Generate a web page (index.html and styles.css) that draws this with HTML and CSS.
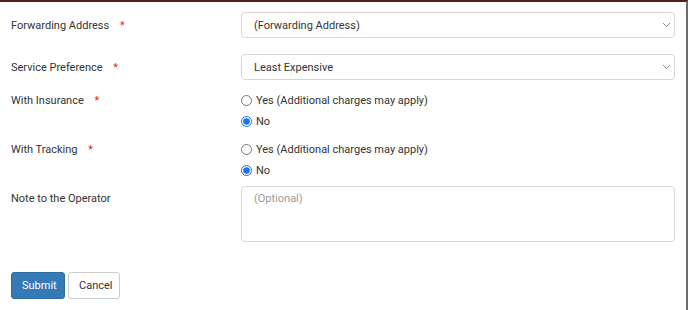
FILE: index.html
```html
<!DOCTYPE html>
<html lang="en">
<head>
    <meta charset="UTF-8">
    <meta name="viewport" content="width=device-width, initial-scale=1.0">
    <title>Forwarding Request</title>
    <link rel="stylesheet" href="styles.css">
</head>
<body>
    <div class="panel">
        <form class="request-form">
            <div class="row row-select">
                <label class="field-label" for="address">Forwarding Address <span class="req">*</span></label>
                <div class="select-wrap">
                    <select id="address" class="control">
                        <option>(Forwarding Address)</option>
                    </select>
                    <svg class="chevron" width="9" height="6" viewBox="0 0 9 6"><path d="M1 1l3.5 3.5L8 1" fill="none" stroke="#888" stroke-width="1"/></svg>
                </div>
            </div>

            <div class="row row-select">
                <label class="field-label" for="service">Service Preference <span class="req">*</span></label>
                <div class="select-wrap">
                    <select id="service" class="control">
                        <option>Least Expensive</option>
                    </select>
                    <svg class="chevron" width="9" height="6" viewBox="0 0 9 6"><path d="M1 1l3.5 3.5L8 1" fill="none" stroke="#888" stroke-width="1"/></svg>
                </div>
            </div>

            <div class="row row-radio row-insurance">
                <span class="field-label">With Insurance <span class="req">*</span></span>
                <div class="radio-group">
                    <label class="radio"><input type="radio" name="insurance"> Yes (Additional charges may apply)</label>
                    <label class="radio"><input type="radio" name="insurance" checked> No</label>
                </div>
            </div>

            <div class="row row-radio row-tracking">
                <span class="field-label">With Tracking <span class="req">*</span></span>
                <div class="radio-group">
                    <label class="radio"><input type="radio" name="tracking"> Yes (Additional charges may apply)</label>
                    <label class="radio"><input type="radio" name="tracking" checked> No</label>
                </div>
            </div>

            <div class="row row-note">
                <label class="field-label" for="note">Note to the Operator</label>
                <textarea id="note" class="control note" placeholder="(Optional)"></textarea>
            </div>

            <div class="actions">
                <button type="button" class="btn btn-primary">Submit</button>
                <button type="button" class="btn btn-default">Cancel</button>
            </div>
        </form>
    </div>
</body>
</html>
```

FILE: styles.css
```css
body {
    margin: 0;
    padding: 0;
    background: #fff;
    font-family: Roboto, "Liberation Sans", Arial, sans-serif;
    font-size: 11px;
    color: #333;
}

/* outer frame */
.panel {
    height: 308px;
    width: 686px;
    border-top: 2px solid #4e1f1f;
    border-right: 2px solid #6b6b6b;
    background: #fff;
}

.request-form {
    padding: 10px 0 0 11px;
}

.row {
    display: grid;
    grid-template-columns: 230px 434px;
    align-items: start;
}

.field-label {
    line-height: 21px;
}

.req {
    color: #e8261b;
    margin-left: 8px;
}

.row-select {
    margin-bottom: 15px;
}
.row-select .field-label {
    line-height: 26px;
    padding-top: 1px;
}

.row-insurance {
    margin-top: -6px;
}
.row-tracking {
    margin-top: 7px;
}
.row-note {
    margin-top: 5px;
}
.row-note .field-label {
    padding-top: 2px;
}

.select-wrap {
    position: relative;
}

.control {
    box-sizing: border-box;
    width: 434px;
    font-family: inherit;
    font-size: 11px;
    color: #333;
    background: #fff;
    border: 1px solid #d9d9d9;
    border-radius: 4px;
}

select.control {
    -webkit-appearance: none;
    appearance: none;
    height: 26px;
    padding: 1px 12px 0;
    outline: none;
}

.chevron {
    position: absolute;
    right: 4px;
    top: 10px;
    pointer-events: none;
}

.radio-group {
    display: flex;
    flex-direction: column;
}

.radio {
    display: flex;
    align-items: center;
    line-height: 21px;
    height: 21px;
}

.radio input {
    margin: 0 4px 0 0;
    width: 11px;
    height: 11px;
    accent-color: #1a73e8;
}

.note {
    height: 56px;
    padding: 5px 12px;
    line-height: 14px;
    resize: none;
}
.note::placeholder {
    color: #999;
}

.actions {
    display: flex;
    gap: 3px;
    margin-top: 30px;
}

.btn {
    height: 27px;
    padding: 0 10px;
    font-family: inherit;
    font-size: 11px;
    border-radius: 3px;
    cursor: pointer;
}
.btn-primary {
    width: 54px;
    color: #fff;
    background: #337ab7;
    border: 1px solid #2e6da4;
}
.btn-default {
    width: 52px;
    color: #333;
    background: #fff;
    border: 1px solid #ccc;
}
```
